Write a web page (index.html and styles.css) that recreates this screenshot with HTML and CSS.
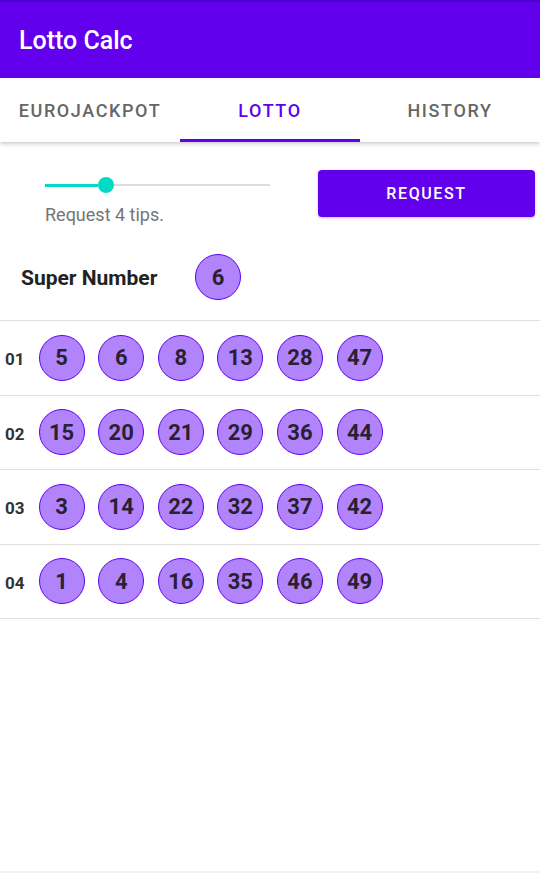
FILE: index.html
```html
<!DOCTYPE html>
<html>

<head>
  <meta charset="utf-8" />
  <title>Lotto Calc</title>
  <link rel="stylesheet" href="styles.css">
</head>

<body>
  <div class="appbar">Lotto Calc</div>

  <div class="tabs">
    <div class="tab">EUROJACKPOT</div>
    <div class="tab active">LOTTO</div>
    <div class="tab">HISTORY</div>
  </div>

  <div class="controls">
    <div class="slider-box">
      <div class="slider">
        <div class="track-on"></div>
        <div class="thumb"></div>
        <div class="track-off"></div>
      </div>
      <div class="hint">Request 4 tips.</div>
    </div>
    <button class="request">REQUEST</button>
  </div>

  <div class="super">
    <span class="super-label">Super Number</span>
    <span class="ball">6</span>
  </div>

  <div class="tips">
    <div class="tip">
      <span class="tip-no">01</span>
      <span class="ball">5</span>
      <span class="ball">6</span>
      <span class="ball">8</span>
      <span class="ball">13</span>
      <span class="ball">28</span>
      <span class="ball">47</span>
    </div>
    <div class="tip">
      <span class="tip-no">02</span>
      <span class="ball">15</span>
      <span class="ball">20</span>
      <span class="ball">21</span>
      <span class="ball">29</span>
      <span class="ball">36</span>
      <span class="ball">44</span>
    </div>
    <div class="tip">
      <span class="tip-no">03</span>
      <span class="ball">3</span>
      <span class="ball">14</span>
      <span class="ball">22</span>
      <span class="ball">32</span>
      <span class="ball">37</span>
      <span class="ball">42</span>
    </div>
    <div class="tip">
      <span class="tip-no">04</span>
      <span class="ball">1</span>
      <span class="ball">4</span>
      <span class="ball">16</span>
      <span class="ball">35</span>
      <span class="ball">46</span>
      <span class="ball">49</span>
    </div>
  </div>
</body>

</html>
```

FILE: styles.css
```css
body {
  margin: 0;
  padding: 0;
  background-color: white;
  font-family: Roboto, "Liberation Sans", sans-serif;
  height: 873px;
  border-bottom: 2px solid #f2f2f2;
  box-sizing: border-box;
}

.appbar {
  height: 78px;
  box-sizing: border-box;
  border-top: 2px solid #4a00c8;
  background-color: #6200ee;
  color: white;
  font-size: 25px;
  font-weight: 500;
  padding-left: 19px;
  display: flex;
  align-items: center;
}

.tabs {
  display: flex;
  height: 64px;
  box-shadow: 0 2px 4px rgba(0, 0, 0, 0.2);
}

.tab {
  width: 180px;
  display: flex;
  align-items: center;
  justify-content: center;
  box-sizing: border-box;
  font-size: 18px;
  font-weight: 500;
  letter-spacing: 1.6px;
  color: #666666;
  border-bottom: 3px solid transparent;
  padding-top: 4px;
}

.tab.active {
  color: #6200ee;
  border-bottom-color: #6200ee;
}

.controls {
  display: flex;
  align-items: flex-start;
  padding: 28px 5px 0 45px;
}

.slider-box {
  width: 225px;
  padding-top: 7px;
}

.slider {
  display: flex;
  align-items: center;
  height: 16px;
}

.track-on {
  width: 53px;
  height: 3px;
  background-color: #03dac5;
}

.thumb {
  width: 16px;
  height: 16px;
  border-radius: 8px;
  background-color: #03dac5;
}

.track-off {
  flex: 1;
  height: 2px;
  background-color: #dcdcdc;
}

.hint {
  margin-top: 11px;
  font-size: 18px;
  color: #757575;
}

.request {
  margin-left: auto;
  width: 217px;
  height: 47px;
  border: 0;
  border-radius: 4px;
  background-color: #6200ee;
  color: white;
  font-family: Roboto, "Liberation Sans", sans-serif;
  font-size: 16px;
  font-weight: 500;
  letter-spacing: 1.6px;
  box-shadow: 0 1px 3px rgba(0, 0, 0, 0.25);
}

.super {
  display: flex;
  align-items: center;
  padding: 27px 0 0 21px;
  height: 50px;
}

.super-label {
  width: 174px;
  font-size: 21px;
  font-weight: bold;
  color: #222222;
  padding-top: 2px;
}

.tips {
  margin-top: 18px;
  border-top: 1px solid #e0e0e0;
}

.tip {
  display: flex;
  align-items: center;
  gap: 13.6px;
  height: 73.5px;
  padding-left: 5px;
  border-bottom: 1px solid #e0e0e0;
}

.tip-no {
  width: 20px;
  font-size: 17px;
  font-weight: bold;
  color: #333333;
  padding-top: 3px;
}

.ball {
  width: 46px;
  height: 46px;
  box-sizing: border-box;
  border-radius: 50%;
  border: 1px solid #6200ee;
  background-color: #b184fc;
  color: #2a1f33;
  font-size: 22px;
  font-weight: bold;
  display: flex;
  align-items: center;
  justify-content: center;
}
```
